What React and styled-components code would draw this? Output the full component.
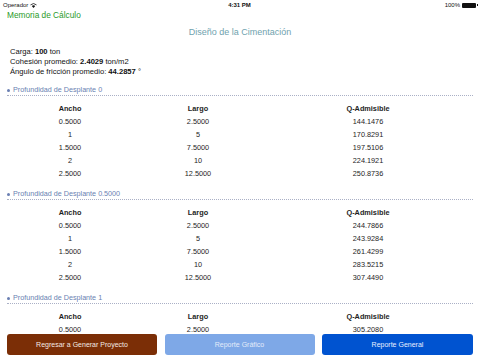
import React from "react";
import styled, { createGlobalStyle } from "styled-components";

const GlobalStyle = createGlobalStyle`
  html, body {
    margin: 0;
    padding: 0;
    background: #fff;
    font-family: "Liberation Sans", Arial, sans-serif;
  }
`;

const Screen = styled.div`
  width: 480px;
  height: 360px;
  display: flex;
  flex-direction: column;
  overflow: hidden;
  background: #fff;
`;

const StatusBar = styled.div`
  height: 10px;
  flex-shrink: 0;
  display: grid;
  grid-template-columns: 1fr auto 1fr;
  align-items: center;
  padding: 0 4px 0 3px;
  font-size: 6px;
  color: #111;
`;

const StatusLeft = styled.div`
  display: flex;
  align-items: center;
  gap: 2px;
`;

const StatusTime = styled.div`
  font-weight: bold;
`;

const StatusRight = styled.div`
  display: flex;
  justify-content: flex-end;
  align-items: center;
  gap: 2px;
`;

const Battery = styled.div`
  width: 14px;
  height: 5px;
  background: #111;
  border-radius: 1px;
  position: relative;
  &::after {
    content: "";
    position: absolute;
    right: -2px;
    top: 1.5px;
    width: 1px;
    height: 2px;
    background: #111;
  }
`;

const NavBar = styled.div`
  flex-shrink: 0;
  display: flex;
  flex-direction: column;
  padding: 0 7px;
`;

const BackLink = styled.div`
  color: #2a9a2a;
  font-size: 8.3px;
  height: 11px;
  line-height: 11px;
`;

const Title = styled.div`
  color: #6fa2ae;
  font-size: 9px;
  text-align: center;
  margin-top: 5px;
  line-height: 12px;
`;

const Content = styled.div`
  flex: 1;
  overflow: hidden;
`;

const Summary = styled.div`
  padding: 9px 10px 0;
  font-size: 7.6px;
  color: #111;
  line-height: 10px;
  margin-bottom: 8px;
`;

const Section = styled.div`
  padding: 0 7px;
  margin-bottom: 9px;
`;

const SectionHeader = styled.div`
  color: #6a7fb2;
  font-size: 7.2px;
  line-height: 10px;
  border-bottom: 1px dotted #aab0c6;
  display: flex;
  align-items: center;
  gap: 3px;
`;

const Dot = styled.span`
  width: 3px;
  height: 3px;
  border-radius: 50%;
  background: #6a7fb2;
`;

const Table = styled.div`
  display: grid;
  grid-template-columns: 126px 130px 1fr;
  margin-top: 7px;
`;

const Cell = styled.div`
  text-align: center;
  font-size: 7.3px;
  color: #1e1e1e;
  font-weight: ${(p) => (p.$head ? "bold" : "normal")};
  line-height: ${(p) => (p.$head ? "12px" : "13px")};
`;

const ButtonBar = styled.div`
  flex-shrink: 0;
  display: grid;
  grid-template-columns: 150px 150px 151px;
  gap: 7.5px;
  padding: 0 7px 5px;
`;

const Button = styled.div`
  height: 21px;
  border-radius: 3px;
  background: ${(p) => p.$bg};
  color: ${(p) => p.$fg || "#f3e9e4"};
  font-size: 7px;
  display: flex;
  align-items: center;
  justify-content: center;
`;

const Wifi = () => (
  <svg width="7" height="5" viewBox="0 0 14 10">
    <path d="M7 10 L3.6 6.2 A5 5 0 0 1 10.4 6.2 Z" fill="#111" />
    <path d="M1 3.8 A9 9 0 0 1 13 3.8" stroke="#111" strokeWidth="1.6" fill="none" />
  </svg>
);

const ancho = ["0.5000", "1", "1.5000", "2", "2.5000"];
const largo = ["2.5000", "5", "7.5000", "10", "12.5000"];

// the last section only shows its first row above the buttons
const sections = [
  {
    depth: "0",
    q: ["144.1476", "170.8291", "197.5106", "224.1921", "250.8736"],
  },
  {
    depth: "0.5000",
    q: ["244.7866", "243.9284", "261.4299", "283.5215", "307.4490"],
  },
  {
    depth: "1",
    q: ["305.2080"],
  },
];

export default function App() {
  return (
    <Screen>
      <GlobalStyle />
      <StatusBar>
        <StatusLeft>
          Operador <Wifi />
        </StatusLeft>
        <StatusTime>4:31 PM</StatusTime>
        <StatusRight>
          100% <Battery />
        </StatusRight>
      </StatusBar>
      <NavBar>
        <BackLink>Memoria de Cálculo</BackLink>
        <Title>Diseño de la Cimentación</Title>
      </NavBar>
      <Content>
        <Summary>
          <div>
            Carga: <b>100</b> ton
          </div>
          <div>
            Cohesión promedio: <b>2.4029</b> ton/m2
          </div>
          <div>
            Ángulo de fricción promedio: <b>44.2857</b> °
          </div>
        </Summary>
        {sections.map((s) => (
          <Section key={s.depth}>
            <SectionHeader>
              <Dot />
              Profundidad de Desplante {s.depth}
            </SectionHeader>
            <Table>
              <Cell $head>Ancho</Cell>
              <Cell $head>Largo</Cell>
              <Cell $head>Q-Admisible</Cell>
              {s.q.map((q, i) => (
                <React.Fragment key={i}>
                  <Cell>{ancho[i]}</Cell>
                  <Cell>{largo[i]}</Cell>
                  <Cell>{q}</Cell>
                </React.Fragment>
              ))}
            </Table>
          </Section>
        ))}
      </Content>
      <ButtonBar>
        <Button $bg="#7b2e06">Regresar a Generar Proyecto</Button>
        <Button $bg="#7ea8e7" $fg="#e2ebfa">Reporte Gráfico</Button>
        <Button $bg="#0053d0" $fg="#e8efff">Reporte General</Button>
      </ButtonBar>
    </Screen>
  );
}
